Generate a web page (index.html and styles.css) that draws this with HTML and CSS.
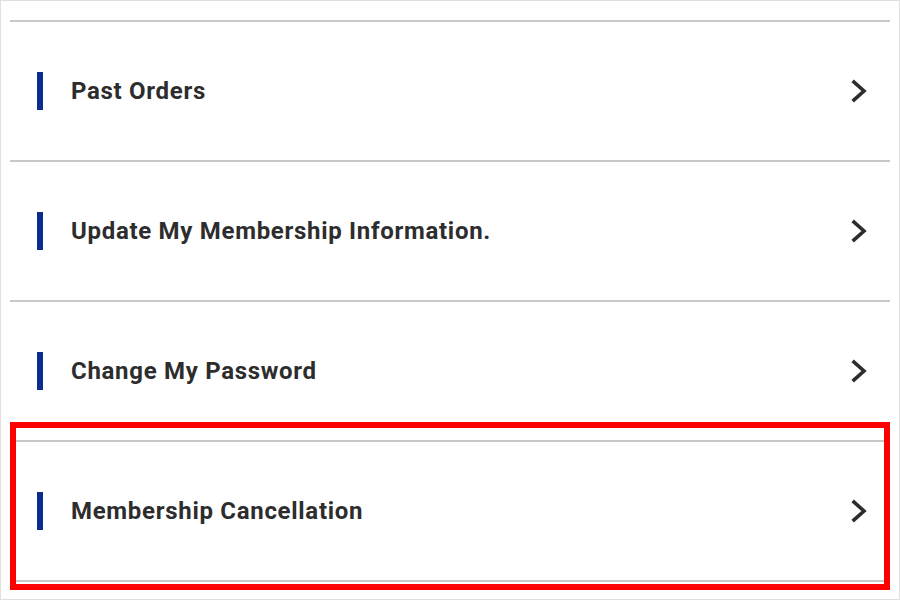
FILE: index.html
```html
<!DOCTYPE html>
<html lang="en">
<head>
    <meta charset="UTF-8">
    <meta name="viewport" content="width=device-width, initial-scale=1.0">
    <title>My Account</title>
    <link rel="stylesheet" href="styles.css">
</head>
<body>
    <div class="frame">
        <ul class="menu">
            <li class="menu-item">
                <a href="#"><span class="label">Past Orders</span><svg class="chevron" viewBox="0 0 16 24"><path d="M3 3 L13 12 L3 21"/></svg></a>
            </li>
            <li class="menu-item">
                <a href="#"><span class="label">Update My Membership Information.</span><svg class="chevron" viewBox="0 0 16 24"><path d="M3 3 L13 12 L3 21"/></svg></a>
            </li>
            <li class="menu-item">
                <a href="#"><span class="label">Change My Password</span><svg class="chevron" viewBox="0 0 16 24"><path d="M3 3 L13 12 L3 21"/></svg></a>
            </li>
            <li class="menu-item highlight">
                <a href="#"><span class="label">Membership Cancellation</span><svg class="chevron" viewBox="0 0 16 24"><path d="M3 3 L13 12 L3 21"/></svg></a>
            </li>
        </ul>
    </div>
</body>
</html>
```

FILE: styles.css
```css
:root {
    --line: #c8c8c8;
    --accent: #0b2d8e;
    --text: #2d2d2d;
}
* { box-sizing: border-box; margin: 0; padding: 0; }
html, body { width: 900px; height: 600px; overflow: hidden; background: #fff; }
body { font-family: Roboto, 'Liberation Sans', sans-serif; }
.frame {
    width: 900px; height: 600px;
    border: 1px solid #e0e0e0;
    padding: 19px 9px 0 9px;
}
.menu { list-style: none; border-bottom: 2px solid var(--line); }
.menu-item { border-top: 2px solid var(--line); position: relative; }
.menu-item a {
    display: flex; align-items: center; justify-content: space-between;
    height: 138px; padding: 0 23px 0 27px;
    color: var(--text); text-decoration: none;
}
.label {
    display: flex; align-items: center; gap: 28px;
    font-size: 24px; font-weight: 700; letter-spacing: 0.7px;
}
.label::before {
    content: ''; width: 6px; height: 38px; background: var(--accent);
}
.chevron {
    width: 16px; height: 24px;
    fill: none; stroke: var(--text); stroke-width: 3.6;
    stroke-linecap: square; stroke-linejoin: miter;
}
.highlight::after {
    content: ''; position: absolute;
    left: 0; right: 0; top: -20px; bottom: -10px;
    border: 6px solid #ff0000; pointer-events: none;
}
```
